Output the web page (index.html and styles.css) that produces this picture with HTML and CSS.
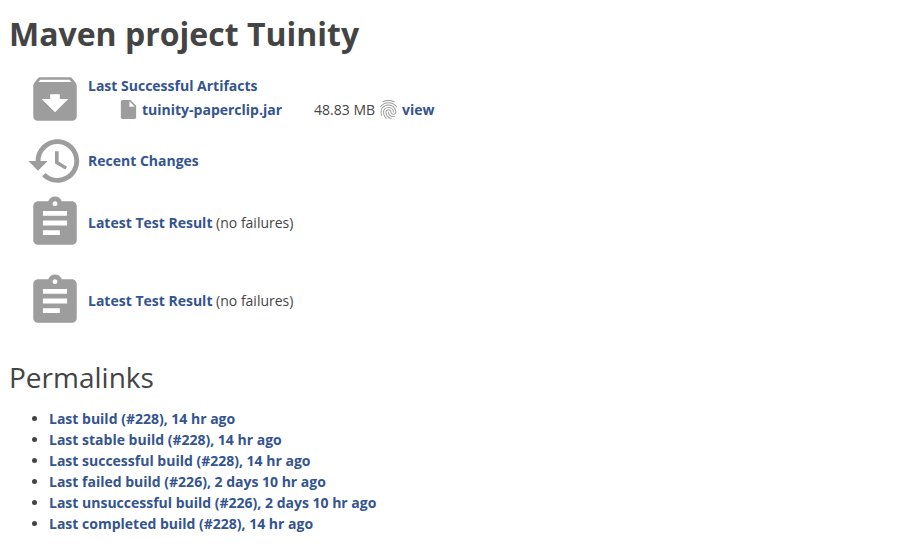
FILE: index.html
```
<!DOCTYPE html>
<html lang="en">
<head>
  <meta charset="UTF-8">
  <meta name="viewport" content="width=device-width, initial-scale=1.0">
  <title>Tuinity</title>
  <link rel="stylesheet" href="styles.css">
</head>
<body>
  <svg class="sprite" aria-hidden="true">
    <symbol id="icon-assignment" viewBox="0 0 24 24">
      <path d="M19 3h-4.180C14.400 1.840 13.300 1 12 1c-1.300 0-2.400.840-2.820 2H5c-1.100 0-2 .9-2 2v14c0 1.100.9 2 2 2h14c1.100 0 2-.9 2-2V5c0-1.100-.9-2-2-2zm-7 0c.550 0 1 .450 1 1s-.450 1-1 1-1-.450-1-1 .450-1 1-1zm2 14H7v-2h7v2zm3-4H7v-2h10v2zm0-4H7V7h10v2z"/>
    </symbol>
  </svg>
  <main class="project">
    <h1>Maven project Tuinity</h1>

    <section class="summary">
      <div class="summary-item">
        <svg class="icon-large" viewBox="0 0 24 24" aria-hidden="true">
          <path d="M20.54 5.23l-1.39-1.68C18.88 3.21 18.47 3 18 3H6c-.47 0-.88.21-1.16.55L3.46 5.23C3.17 5.57 3 6.02 3 6.5V19c0 1.100.9 2 2 2h14c1.100 0 2-.9 2-2V6.5c0-.48-.17-.93-.46-1.27zM12 17.5L6.5 12H10v-2h4v2h3.5L12 17.5zM5.12 5l.81-1h12l.94 1H5.12z"/>
        </svg>
        <div class="summary-text artifacts">
          <a href="#">Last Successful Artifacts</a>
          <div class="artifact">
            <svg class="icon-small" viewBox="0 0 24 24" aria-hidden="true">
              <path d="M6 2c-1.100 0-1.990.9-1.990 2L4 20c0 1.100.890 2 1.990 2H18c1.100 0 2-.9 2-2V8l-6-6H6zm7 7V3.500L18.500 9H13z"/>
            </svg>
            <a href="#">tuinity-paperclip.jar</a>
            <span class="size">48.83 MB</span>
            <svg class="icon-small" viewBox="0 0 24 24" aria-hidden="true">
              <path d="M17.81 4.47c-.08 0-.16-.02-.23-.06C15.66 3.42 14 3 12.01 3c-1.98 0-3.86.47-5.57 1.41-.24.13-.54.04-.68-.2-.13-.24-.04-.55.2-.68C7.82 2.52 9.86 2 12.01 2c2.13 0 3.99.47 6.03 1.52.25.13.34.43.21.67-.09.18-.26.28-.44.28zM3.5 9.72c-.1 0-.2-.03-.29-.09-.23-.16-.28-.47-.12-.7.99-1.4 2.25-2.5 3.75-3.27C9.98 4.04 14 4.03 17.15 5.65c1.5.77 2.76 1.86 3.75 3.25.16.22.11.54-.12.7-.23.16-.54.11-.7-.12-.9-1.26-2.04-2.25-3.39-2.94-2.87-1.47-6.54-1.47-9.4.01-1.36.7-2.5 1.7-3.4 2.96-.08.14-.23.21-.39.21zm6.25 12.07c-.13 0-.26-.05-.35-.15-.87-.87-1.34-1.43-2.01-2.64-.69-1.23-1.05-2.73-1.05-4.34 0-2.97 2.54-5.39 5.66-5.39s5.66 2.42 5.66 5.39c0 .28-.22.5-.5.5s-.5-.22-.5-.5c0-2.42-2.09-4.39-4.66-4.39-2.57 0-4.66 1.97-4.66 4.39 0 1.44.32 2.77.93 3.85.64 1.15 1.08 1.64 1.85 2.42.19.2.19.51 0 .71-.11.1-.24.15-.37.15zm7.17-1.85c-1.19 0-2.24-.3-3.1-.89-1.49-1.01-2.38-2.65-2.38-4.39 0-.28.22-.5.5-.5s.5.22.5.5c0 1.41.72 2.74 1.94 3.56.71.48 1.54.71 2.54.71.24 0 .64-.03 1.04-.1.27-.05.53.13.58.41.05.27-.13.53-.41.58-.57.11-1.07.12-1.21.12zM14.91 22c-.04 0-.09-.01-.13-.02-1.59-.44-2.63-1.03-3.72-2.1-1.4-1.39-2.17-3.24-2.17-5.22 0-1.62 1.38-2.94 3.08-2.94 1.7 0 3.08 1.32 3.08 2.94 0 1.07.93 1.94 2.08 1.94s2.08-.87 2.08-1.94c0-3.77-3.25-6.83-7.25-6.83-2.84 0-5.44 1.58-6.61 4.03-.39.81-.59 1.76-.59 2.8 0 .78.07 2.01.67 3.61.1.26-.03.55-.29.64-.26.1-.55-.04-.64-.29-.49-1.31-.73-2.61-.73-3.96 0-1.2.23-2.29.68-3.24 1.33-2.79 4.28-4.6 7.51-4.6 4.55 0 8.25 3.51 8.25 7.83 0 1.62-1.38 2.94-3.08 2.94s-3.08-1.32-3.08-2.94c0-1.07-.93-1.94-2.08-1.94s-2.08.87-2.08 1.94c0 1.71.66 3.31 1.87 4.51.95.94 1.86 1.46 3.27 1.85.27.07.42.35.35.61-.05.23-.26.38-.47.38z"/>
            </svg>
            <a href="#">view</a>
          </div>
        </div>
      </div>
      <div class="summary-item">
        <svg class="icon-large" viewBox="0 0 24 24" aria-hidden="true">
          <path d="M13 3c-4.970 0-9 4.030-9 9H1l3.890 3.890.070.140L9 12H6c0-3.870 3.130-7 7-7s7 3.130 7 7-3.130 7-7 7c-1.930 0-3.680-.790-4.940-2.060l-1.420 1.420C8.270 19.990 10.510 21 13 21c4.970 0 9-4.030 9-9s-4.030-9-9-9zm-1 5v5l4.280 2.540.720-1.210-3.500-2.080V8H12z"/>
        </svg>
        <p class="summary-text"><a href="#">Recent Changes</a></p>
      </div>
      <div class="summary-item">
        <svg class="icon-large" aria-hidden="true"><use href="#icon-assignment"/></svg>
        <p class="summary-text"><a href="#">Latest Test Result</a> (no failures)</p>
      </div>
      <div class="summary-item aggregated">
        <svg class="icon-large" aria-hidden="true"><use href="#icon-assignment"/></svg>
        <p class="summary-text"><a href="#">Latest Test Result</a> (no failures)</p>
      </div>
    </section>

    <h2>Permalinks</h2>
    <ul class="permalinks">
      <li><a href="#">Last build (#228), 14 hr ago</a></li>
      <li><a href="#">Last stable build (#228), 14 hr ago</a></li>
      <li><a href="#">Last successful build (#228), 14 hr ago</a></li>
      <li><a href="#">Last failed build (#226), 2 days 10 hr ago</a></li>
      <li><a href="#">Last unsuccessful build (#226), 2 days 10 hr ago</a></li>
      <li><a href="#">Last completed build (#228), 14 hr ago</a></li>
    </ul>
  </main>
</body>
</html>
```
FILE: styles.css
```
body {
  margin: 0;
  background: #fff;
  color: #444;
  font-family: "Open Sans", "Noto Sans", sans-serif;
  font-size: 14px;
  line-height: 21px;
}
.sprite {
  display: none;
}
.project {
  padding: 10px 9px;
}
h1 {
  margin: 0 0 12px;
  font-size: 32px;
  font-weight: 700;
  line-height: 48px;
}
h2 {
  margin: 28px 0 12px;
  font-size: 28px;
  font-weight: 400;
  line-height: 38px;
}
p {
  margin: 0;
}
a {
  color: #34548f;
  font-weight: 700;
  text-decoration: none;
}
a:hover {
  text-decoration: underline;
}
svg {
  flex: none;
  fill: #9d9d9d;
}
.summary {
  display: flex;
  flex-direction: column;
  gap: 4px;
  padding-left: 17px;
}
.summary-item {
  display: flex;
  align-items: center;
  gap: 4px;
}
.summary-text {
  padding-bottom: 2px;
}
.icon-large {
  width: 58px;
  height: 58px;
}
.icon-small {
  width: 23px;
  height: 23px;
}
.artifacts {
  display: flex;
  flex-direction: column;
  gap: 2px;
}
.artifact {
  display: flex;
  align-items: center;
  gap: 2px;
  padding-left: 29px;
}
.size {
  margin-left: 30px;
}
.aggregated {
  margin-top: 16px;
}
.permalinks {
  margin: 0;
  padding-left: 40px;
}
```
